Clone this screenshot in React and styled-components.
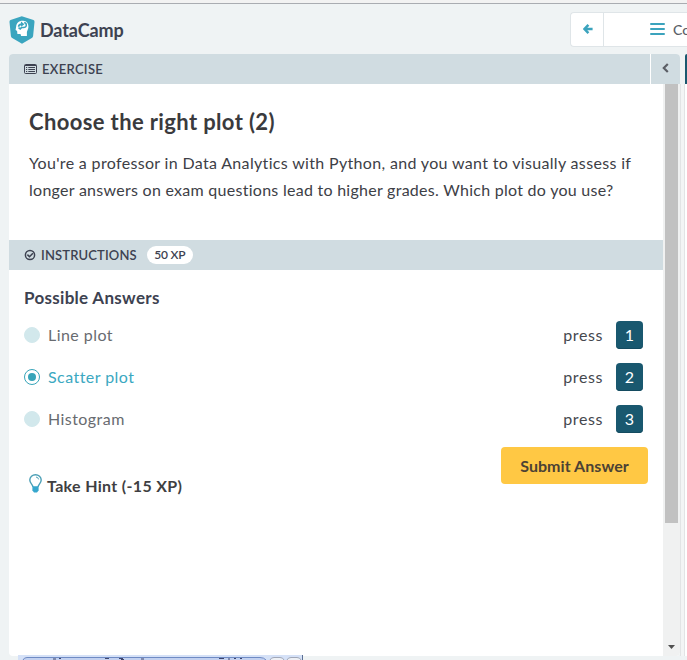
import React from 'react';
import styled, { createGlobalStyle } from 'styled-components';

const GlobalStyle = createGlobalStyle`
  * { box-sizing: border-box; }
  body {
    margin: 0;
    overflow: hidden;
    background: #eff3f4;
    color: #3d4251;
    font-family: Lato, sans-serif;
  }
`;

const Page = styled.div`
  width: 687px;
  height: 660px;
  display: flex;
  flex-direction: column;
  overflow: hidden;
`;

const BrowserEdge = styled.div`
  height: 4px;
  flex: none;
  background: #f2f2f2;
  border-bottom: 1px solid #a9acb1;
`;

const Header = styled.header`
  height: 50px;
  flex: none;
  display: flex;
  justify-content: space-between;
  padding: 8px 0 0 9px;
`;

const Brand = styled.div`
  display: flex;
  height: 36px;
  align-items: center;
  gap: 5px;
  font-size: 18px;
  font-weight: 700;
  letter-spacing: -0.1px;
  color: #3d4251;
`;

const Nav = styled.nav`
  display: flex;
  width: 117px;
  height: 35px;
  background: #fff;
  border: 1px solid #dfe5e8;
  border-right: 0;
  border-radius: 4px 0 0 4px;
  overflow: hidden;
`;

const BackButton = styled.div`
  width: 33px;
  flex: none;
  display: flex;
  align-items: center;
  justify-content: center;
  padding: 0 0 2px 2px;
  border-right: 1px solid #dfe5e8;
`;

const Outline = styled.div`
  display: flex;
  flex: none;
  align-items: center;
  gap: 8px;
  padding: 0 0 1px 46px;
  font-size: 14px;
  font-weight: 500;
  color: #5b5f68;
  white-space: nowrap;
`;

const Workspace = styled.div`
  display: flex;
  height: 602px;
  flex: none;
  padding-left: 9px;
`;

const Panel = styled.main`
  width: 671px;
  flex: none;
  display: flex;
  flex-direction: column;
  background: #fff;
  border-radius: 4px;
  overflow: hidden;
`;

const Gutter = styled.div`
  width: 5px;
  flex: none;
  margin-top: 30px;
  background: #f3f5f5;
  border: solid #e2e4e5;
  border-width: 0 1px;
`;

const NextPanel = styled.div`
  flex: 1;
  background: #fff;
  border-radius: 4px 0 0 0;
  overflow: hidden;
`;

const NextPanelTab = styled.div`
  height: 30px;
  background: #19586f;
`;

const Bar = styled.div`
  display: flex;
  align-items: center;
  height: 30px;
  flex: none;
  padding-left: 15px;
  background: #d0dce1;
  font-size: 13px;
  font-weight: 600;
  color: #3d4251;
`;

const BarLabel = styled.span`
  margin-left: 5px;
  letter-spacing: ${(p) => p.$spacing || 0}px;
`;

const Collapse = styled.div`
  display: flex;
  align-items: center;
  justify-content: center;
  width: 30px;
  height: 30px;
  margin-left: auto;
  padding-bottom: 2px;
  border-left: 1px solid #fff;
`;

const XpBadge = styled.span`
  display: flex;
  align-items: center;
  justify-content: center;
  width: 46px;
  height: 18px;
  margin-left: 10px;
  padding-bottom: 1px;
  border-radius: 9px;
  background: #fff;
  font-size: 12px;
  letter-spacing: -0.2px;
`;

const Body = styled.div`
  display: flex;
  flex: 1;
`;

const Content = styled.div`
  width: 654px;
  flex: none;
`;

const Exercise = styled.section`
  height: 156px;
  padding: 24px 20px 0;
`;

const Title = styled.h1`
  margin: 0;
  font-size: 22px;
  line-height: 28px;
  font-weight: 700;
  letter-spacing: 0.37px;
  color: #3a3a3d;
`;

const Description = styled.p`
  margin: 13px 0 0;
  font-size: 16px;
  line-height: 27px;
  color: #3d4046;
  white-space: nowrap;
`;

const DescriptionLine = styled.span`
  display: block;
  letter-spacing: ${(p) => p.$spacing}px;
`;

const Answers = styled.section`
  padding: 16px 15px 0;
`;

const AnswersTitle = styled.h2`
  margin: 0 0 11px;
  font-size: 17px;
  line-height: 24px;
  font-weight: 700;
  letter-spacing: 0.3px;
`;

const Option = styled.label`
  display: flex;
  align-items: center;
  height: 28px;
  margin-bottom: 14px;
  padding-right: 5px;
  font-size: 16px;
  letter-spacing: 0.5px;
  color: ${(p) => (p.$selected ? '#3ba8c1' : '#686b70')};
`;

const OptionText = styled.span`
  padding-bottom: 1px;
  letter-spacing: 0.45px;
`;

const Radio = styled.span`
  display: flex;
  align-items: center;
  justify-content: center;
  width: 16px;
  height: 16px;
  margin-right: 8px;
  border-radius: 50%;
  background: ${(p) => (p.$selected ? '#fff' : '#d2e8ec')};
  border: 1px solid ${(p) => (p.$selected ? '#37a4b9' : '#d2e8ec')};
`;

const RadioDot = styled.span`
  width: 8px;
  height: 8px;
  border-radius: 50%;
  background: #37a4b9;
`;

const Press = styled.span`
  margin-left: auto;
  padding-bottom: 1px;
  letter-spacing: 0.6px;
  color: #45484e;
`;

const Key = styled.kbd`
  display: flex;
  align-items: center;
  justify-content: center;
  width: 27px;
  height: 28px;
  margin-left: 13px;
  padding-bottom: 2px;
  border-radius: 4px;
  background: #19586f;
  box-shadow: inset 0 -1px 0 #144b60;
  color: #fff;
  font: 16px Lato, sans-serif;
  letter-spacing: 0;
`;

const Actions = styled.div`
  display: flex;
  justify-content: space-between;
`;

const Hint = styled.div`
  display: flex;
  align-items: center;
  height: 24px;
  margin: 26px 0 0 5px;
  gap: 5px;
  font-size: 16px;
  font-weight: 700;
  letter-spacing: 0.33px;
  color: #3f3f42;
`;

const HintIcon = styled.svg`
  margin-top: -4px;
`;

const Submit = styled.button`
  width: 147px;
  height: 37px;
  padding: 0;
  border: 0;
  border-radius: 4px;
  background: #ffc844;
  color: #4c4234;
  font: 700 16px Lato, sans-serif;
  letter-spacing: 0.05px;
`;

const Scrollbar = styled.div`
  width: 17px;
  display: flex;
  flex-direction: column;
  align-items: center;
  justify-content: space-between;
  background: #f0f1f1;
`;

const Thumb = styled.div`
  width: 13px;
  height: 439px;
  margin-right: 1px;
  background: #c1c1c1;
`;

const ScrollArrow = styled.svg`
  margin: 0 1px 7px 0;
`;

const Taskbar = styled.svg`
  display: block;
  flex: none;
  margin: -1px 0 0 18px;
`;

const answers = ['Line plot', 'Scatter plot', 'Histogram'];

function Logo() {
  return (
    <svg width="26" height="28" viewBox="0 0 26 28">
      <path d="M12.8.3 24.5 4Q25.7 4.4 25.5 6l-1.4 14q-.2 1.4-1.3 2L13 27.7 3.2 22q-1.1-.6-1.3-2L.5 6Q.3 4.4 1.5 4z" fill="#3aa5bf" />
      <path d="M7.2 10.3c.4-3.6 3.3-5.8 6.9-5.5 3.5.2 5.5 2.6 5.3 6.1-.1 2.3-1.2 3.6-1.5 5.2v3.9h-5.8l-.6-1.9H8.4l-.3-3.2-1.5-.9z" fill="#fff" />
      <path d="M8.8 10.8C8.7 8.8 10 7.5 11.8 7.4l.3-1.8 3.3 2.7-3.3 2.5V9.4c-1 0-1.5.5-1.5 1.4z" fill="#3aa5bf" />
      <path d="M15.2 6.6c1.6.4 2.3 1.6 2.1 2.9-.2 1.3-1.2 2.1-2.7 2.1h-2.1l-1.3 1.3-1.7-1.3" fill="none" stroke="#3aa5bf" strokeWidth="1.5" />
    </svg>
  );
}

export default function App() {
  return (
    <>
      <GlobalStyle />
      <Page>
        <BrowserEdge />
        <Header>
          <Brand>
            <Logo />
            DataCamp
          </Brand>
          <Nav>
            <BackButton>
              <svg width="10" height="10" viewBox="0 0 10 10" fill="none" stroke="#3ba3bd" strokeWidth="2.5">
                <path d="M5.4.9 1.4 5l4 4.1M1.6 5h8" />
              </svg>
            </BackButton>
            <Outline>
              <svg width="15" height="12" viewBox="0 0 15 12" stroke="#3ba3bd" strokeWidth="2" strokeLinecap="round">
                <path d="M1 1h13M1 6h13M1 11h13" />
              </svg>
              Course Outline
            </Outline>
          </Nav>
        </Header>
        <Workspace>
          <Panel>
            <Bar>
              <svg width="13" height="10" viewBox="0 0 13 10" fill="none" stroke="#3d4251">
                <rect x=".5" y=".5" width="12" height="9" rx="1" />
                <path d="M1 1.5h11M2 3.5h1.2M4.3 3.5H11M2 5.5h1.2M4.3 5.5H11M2 7.5h1.2M4.3 7.5H11" />
              </svg>
              <BarLabel $spacing={0.3}>EXERCISE</BarLabel>
              <Collapse>
                <svg width="7" height="10" viewBox="0 0 7 10" fill="none" stroke="#5c5f66" strokeWidth="2.2">
                  <path d="M5.8 1 1.8 5l4 4" />
                </svg>
              </Collapse>
            </Bar>
            <Body>
              <Content>
                <Exercise>
                  <Title>Choose the right plot (2)</Title>
                  <Description>
                    <DescriptionLine $spacing={0.335}>
                      You're a professor in Data Analytics with Python, and you want to visually assess if
                    </DescriptionLine>
                    <DescriptionLine $spacing={0.27}>
                      longer answers on exam questions lead to higher grades. Which plot do you use?
                    </DescriptionLine>
                  </Description>
                </Exercise>
                <Bar>
                  <svg width="12" height="12" viewBox="0 0 12 12" fill="none" stroke="#3d4251" strokeWidth="1.5">
                    <circle cx="6" cy="6" r="4.6" />
                    <path d="m3.4 5.6 2.1 2.1 3.4-3.4" />
                  </svg>
                  <BarLabel $spacing={0.15}>INSTRUCTIONS</BarLabel>
                  <XpBadge>50 XP</XpBadge>
                </Bar>
                <Answers>
                  <AnswersTitle>Possible Answers</AnswersTitle>
                  {answers.map((answer, i) => (
                    <Option key={answer} $selected={i === 1}>
                      <Radio $selected={i === 1}>{i === 1 && <RadioDot />}</Radio>
                      <OptionText>{answer}</OptionText>
                      <Press>press</Press>
                      <Key>{i + 1}</Key>
                    </Option>
                  ))}
                  <Actions>
                    <Hint>
                      <HintIcon width="13" height="19" viewBox="0 0 13 19" fill="none">
                        <path d="M4 13C3.8 10.5.8 9.4.8 6a5.7 5.2 0 0 1 11.4 0c0 3.4-3 4.5-3.2 7" stroke="#4b9fb6" strokeWidth="1.4" />
                        <path d="M7 3q2.2.2 2.6 2.4" stroke="#4b9fb6" />
                        <path d="M3.4 12.2h6.2v4.2L8 18.6H5l-1.6-2.2z" fill="#36a7cd" />
                      </HintIcon>
                      Take Hint (-15 XP)
                    </Hint>
                    <Submit>Submit Answer</Submit>
                  </Actions>
                </Answers>
              </Content>
              <Scrollbar>
                <Thumb />
                <ScrollArrow width="7" height="4" viewBox="0 0 7 4">
                  <path d="M0 0h7L3.5 4z" fill="#505050" />
                </ScrollArrow>
              </Scrollbar>
            </Body>
          </Panel>
          <Gutter />
          <NextPanel>
            <NextPanelTab />
          </NextPanel>
        </Workspace>
        <Taskbar width="286" height="5" viewBox="0 0 286 5">
          <path d="M0 0h285v5H0z" fill="#d5e1f7" />
          <path d="M5 5Q6 2.5 9 2.5H242Q246 2.5 248 5" fill="#c3d1f0" stroke="#6f8bc4" />
          <path d="M252 5q1-2.5 4-2.5h6q3 0 4 2.5M269 5q1-2.5 4-2.5h6q3 0 4 2.5" fill="#eef0f5" stroke="#a1a8b8" />
          <path d="M35 4h3M41 3.5h2M87 3.5h4M101 3.5h4M103 4.5h3M123 4h3M201 3.5h5M210 4h2M216 3.5h2M222 3.5h2" stroke="#3e456d" />
          <path d="M284.5 0v5" stroke="#5b6f94" />
        </Taskbar>
      </Page>
    </>
  );
}
